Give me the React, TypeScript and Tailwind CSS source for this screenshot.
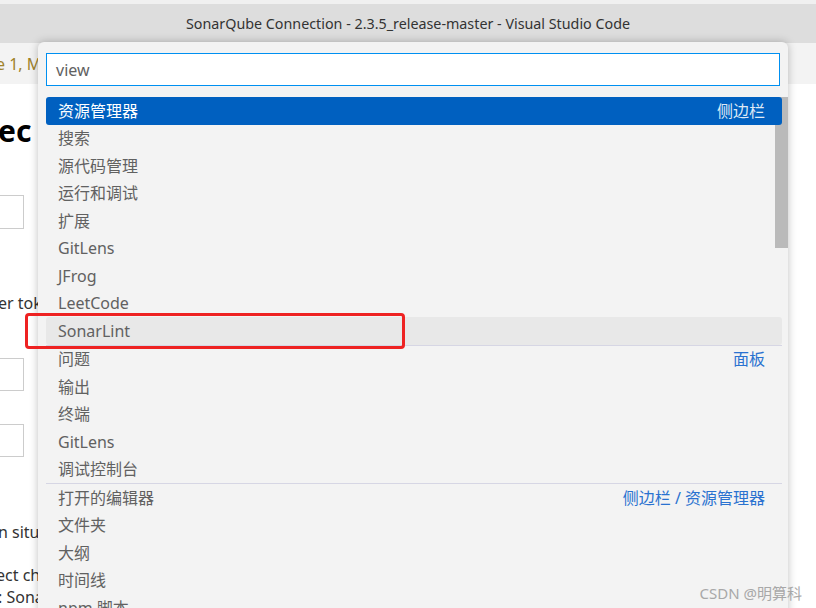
import React from "react";

const FONT = { fontFamily: '"Noto Sans", "Noto Sans CJK SC", sans-serif' };

type Row = { label: string; desc?: string; sep?: boolean; state?: "selected" | "hover" };

const rows: Row[] = [
  { label: "资源管理器", desc: "侧边栏", state: "selected" },
  { label: "搜索" },
  { label: "源代码管理" },
  { label: "运行和调试" },
  { label: "扩展" },
  { label: "GitLens" },
  { label: "JFrog" },
  { label: "LeetCode" },
  { label: "SonarLint", state: "hover" },
  { label: "问题", desc: "面板", sep: true },
  { label: "输出" },
  { label: "终端" },
  { label: "GitLens" },
  { label: "调试控制台" },
  { label: "打开的编辑器", desc: "侧边栏 / 资源管理器", sep: true },
  { label: "文件夹" },
  { label: "大纲" },
  { label: "时间线" },
  { label: "npm 脚本" },
];

function PickRow({ row }: { row: Row }) {
  const selected = row.state === "selected";
  const hover = row.state === "hover";
  return (
    <div className={"relative " + (row.sep ? "border-t border-[#d6d6e4]" : "")}>
      <div
        className={
          "flex items-center justify-between h-[27.5px] pl-3 pr-[17px] rounded-[3px] text-[16px] " +
          (selected ? "bg-[#0060c0] text-white" : hover ? "bg-[#e8e8e8] text-[#616161]" : "text-[#616161]")
        }
      >
        <span>{row.label}</span>
        {row.desc && (
          <span className={selected ? "text-[#dfe9f5]" : "text-[#2a72d0]"}>{row.desc}</span>
        )}
      </div>
    </div>
  );
}

export default function App() {
  return (
    <div className="relative w-[816px] h-[608px] overflow-hidden bg-white" style={FONT}>
      {/* title bar */}
      <div className="h-[43px] border-t-4 border-[#f0f0f0] bg-[#dddddd] flex items-center justify-center text-[14.3px] text-[#333333]">
        SonarQube Connection - 2.3.5_release-master - Visual Studio Code
      </div>

      {/* tab strip */}
      <div className="h-[41px] bg-[#f3f3f3] flex items-center">
        <span className="-ml-[4px] text-[16px] text-[#a0822a]">e 1, M</span>
      </div>

      {/* background page */}
      <div className="w-[40px] overflow-hidden flex flex-col">
        <div className="mt-[29px] -ml-[2px] text-[30px] font-bold text-black leading-[36px]">ec</div>
        <div className="mt-[46px] -ml-[4px] w-[28px] h-[34px] border border-[#cccccc]" />
        <div className="mt-[62px] -ml-[2px] text-[16px] text-[#333] whitespace-nowrap">er tok</div>
        <div className="mt-[43px] -ml-[4px] w-[28px] h-[33px] border border-[#cccccc]" />
        <div className="mt-[33px] -ml-[4px] w-[28px] h-[33px] border border-[#cccccc]" />
        <div className="mt-[63px] -ml-[2px] text-[16px] text-[#333] whitespace-nowrap">n situ</div>
        <div className="mt-[20px] -ml-[4px] text-[16px] text-[#333] whitespace-nowrap leading-[22px]">ect ch</div>
        <div className="-ml-[2px] text-[16px] text-[#333] whitespace-nowrap leading-[22px]">: Sona</div>
      </div>

      {/* quick pick overlay */}
      <div className="absolute left-[38px] top-[42px] w-[750px] h-[580px] bg-[#f3f3f3] rounded-t-[6px] shadow-[0_0_8px_rgba(0,0,0,0.25)]">
        <div className="mx-2 mt-[11px] h-[33px] bg-white border border-[#0090f1] flex items-center pl-[9px] text-[16px] text-[#616161]">
          view
        </div>
        <div className="relative mt-[11px] pl-2 pr-[6px]">
          <div className="absolute right-0 top-0 w-[13px] h-[151px] bg-[#bababa]" />
          {rows.map((r, i) => (
            <PickRow key={i} row={r} />
          ))}
        </div>
      </div>

      {/* red highlight box */}
      <div className="absolute left-[25px] top-[313px] w-[380px] h-[36px] border-[3px] border-[#ee2222] rounded-[4px]" />

      {/* watermark */}
      <div className="absolute right-[14px] bottom-[4px] text-[15px] text-[#a8a8a8]">CSDN @明算科</div>
    </div>
  );
}
